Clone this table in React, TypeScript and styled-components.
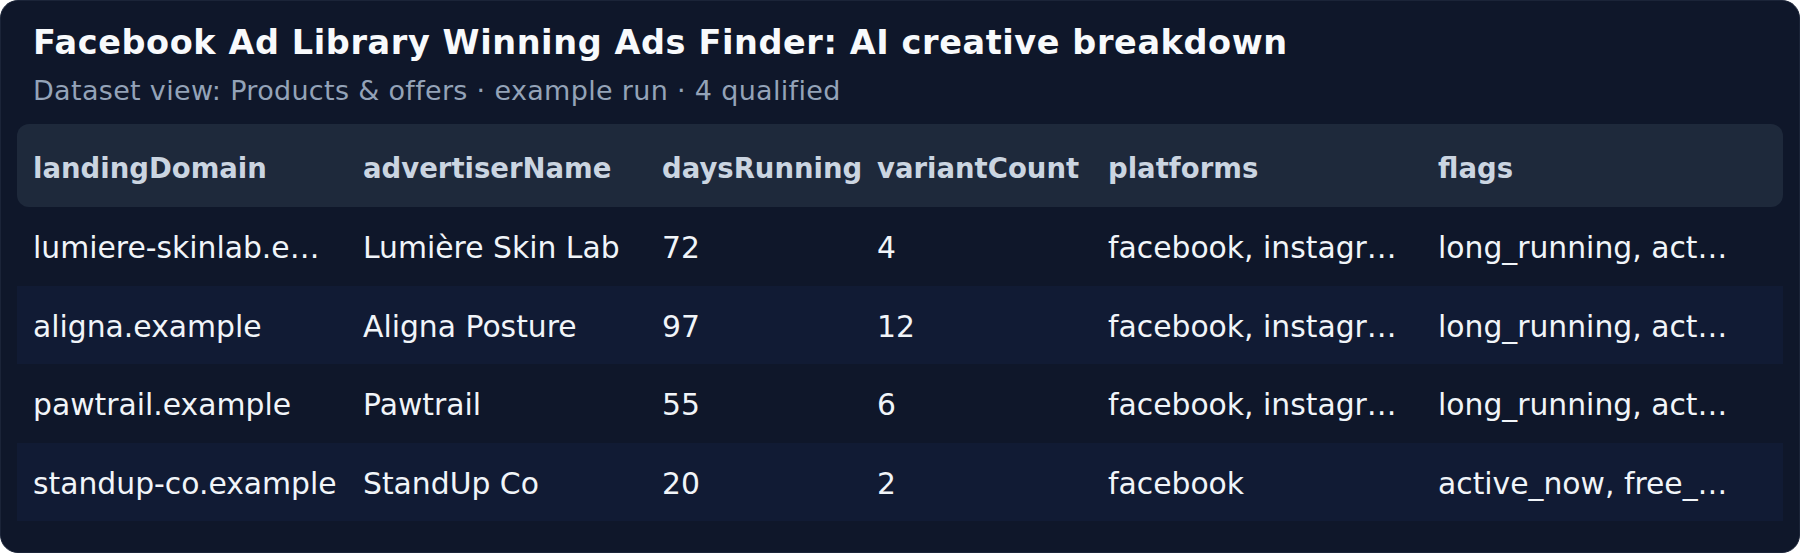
import React from "react";
import styled, { createGlobalStyle } from "styled-components";

const Global = createGlobalStyle`
  html, body { margin: 0; padding: 0; background: #ffffff; }
  * { box-sizing: border-box; }
  body { font-family: "DejaVu Sans", "Liberation Sans", sans-serif; }
`;

const Card = styled.div`
  width: 1800px;
  height: 553px;
  background: #0f172a;
  border: 1px solid #1b2438;
  border-radius: 18px;
  padding: 22px 16px 0 16px;
  display: flex;
  flex-direction: column;
  overflow: hidden;
`;

const Header = styled.div`
  padding: 0 16px;
  display: flex;
  flex-direction: column;
  gap: 13px;
`;

const Title = styled.h1`
  margin: 0;
  font-size: 33.5px;
  letter-spacing: 0.6px;
  line-height: 39px;
  font-weight: 700;
  color: #f8fafc;
  white-space: nowrap;
`;

const Subtitle = styled.p`
  margin: 0;
  font-size: 27px;
  letter-spacing: 0.32px;
  line-height: 31px;
  color: #94a3b8;
  white-space: nowrap;
`;

const Table = styled.div`
  margin-top: 18px;
  display: grid;
  grid-template-columns: 330px 299px 215px 231px 330px 1fr;
`;

const HeadRow = styled.div`
  display: contents;
`;

const HeadCell = styled.div<{ $first?: boolean; $last?: boolean }>`
  background: #1e293b;
  height: 83px;
  padding: 5px 16px 0 16px;
  display: flex;
  align-items: center;
  font-size: 27.5px;
  font-weight: 700;
  color: #cbd5e1;
  white-space: nowrap;
  border-radius: ${(p) =>
    p.$first ? "12px 0 0 12px" : p.$last ? "0 12px 12px 0" : "0"};
`;

const Row = styled.div`
  display: contents;
`;

const Cell = styled.div<{ $alt: boolean }>`
  background: ${(p) => (p.$alt ? "#111b34" : "#0f172a")};
  height: 78.5px;
  padding: 3px 16px 0 16px;
  display: flex;
  align-items: center;
  font-size: 29.8px;
  color: #f1f5f9;
  white-space: nowrap;
  min-width: 0;
`;

const columns = [
  "landingDomain",
  "advertiserName",
  "daysRunning",
  "variantCount",
  "platforms",
  "flags",
];

const rows: string[][] = [
  [
    "lumiere-skinlab.example",
    "Lumière Skin Lab",
    "72",
    "4",
    "facebook, instagram, messenger",
    "long_running, active_now",
  ],
  [
    "aligna.example",
    "Aligna Posture",
    "97",
    "12",
    "facebook, instagram, messenger",
    "long_running, active_now",
  ],
  [
    "pawtrail.example",
    "Pawtrail",
    "55",
    "6",
    "facebook, instagram",
    "long_running, active_now",
  ],
  [
    "standup-co.example",
    "StandUp Co",
    "20",
    "2",
    "facebook",
    "active_now, free_shipping",
  ],
];

const truncate = (s: string, max = 18) =>
  s.length > max ? s.slice(0, max - 1) + "…" : s;

export default function App() {
  return (
    <>
      <Global />
      <Card>
        <Header>
          <Title>Facebook Ad Library Winning Ads Finder: AI creative breakdown</Title>
          <Subtitle>Dataset view: Products &amp; offers · example run · 4 qualified</Subtitle>
        </Header>
        <Table>
          <HeadRow>
            {columns.map((c, i) => (
              <HeadCell key={c} $first={i === 0} $last={i === columns.length - 1}>
                {c}
              </HeadCell>
            ))}
          </HeadRow>
          {rows.map((r, ri) => (
            <Row key={ri}>
              {r.map((v, ci) => (
                <Cell key={ci} $alt={ri % 2 === 1}>
                  {truncate(v)}
                </Cell>
              ))}
            </Row>
          ))}
        </Table>
      </Card>
    </>
  );
}
